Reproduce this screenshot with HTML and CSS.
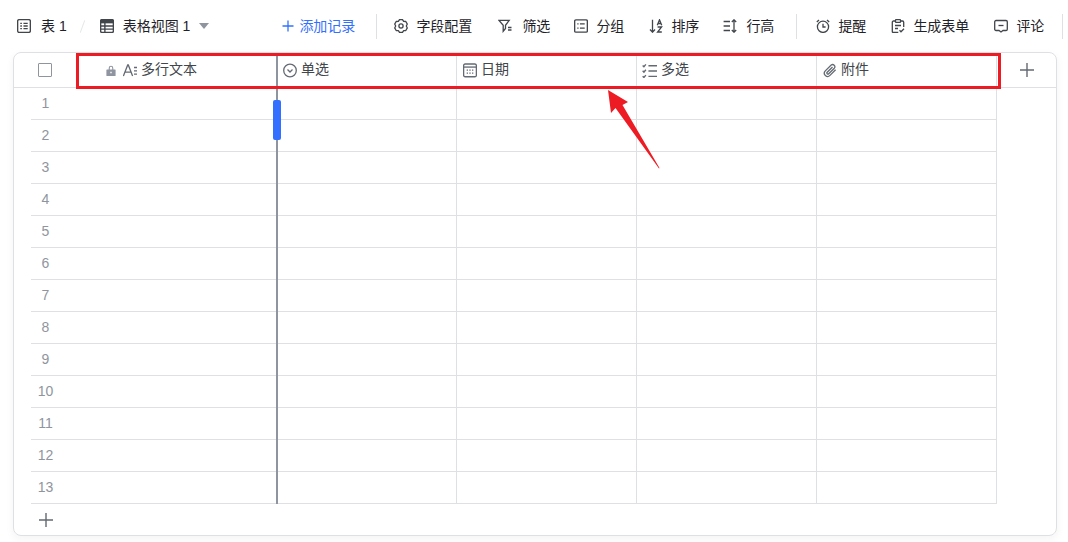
FILE: index.html
```html
<!DOCTYPE html>
<html lang="zh">
<head>
<meta charset="utf-8">
<title>表格视图 1</title>
<link rel="stylesheet" href="styles.css">
</head>
<body>
<header class="toolbar">
  <div class="tool tool-table"><svg class="icon" viewBox="0.4 0.4 13.2 13.2"><rect x="1" y="1" width="12" height="12" rx="1.5" class="s"/><path class="s" d="M3.500 4.500h1.500M6.500 4.500h4M3.500 7h1.500M6.500 7h4M3.500 9.500h1.500M6.500 9.500h4"/></svg><span>表 1</span></div>
  <span class="slash"></span>
  <div class="tool tool-view"><svg class="icon" viewBox="0.4 0.4 13.2 13.2"><rect x="1" y="1" width="12" height="12" rx="1.200" class="s"/><path class="f" d="M1 1h12v3.500H1z"/><path class="s" d="M1 7h12M1 10h12M5 4v9"/></svg><span>表格视图 1</span><i class="caret"></i></div>
  <div class="tool tool-add"><svg class="plus" viewBox="0 0 12 12"><path d="M6 .5v11M.5 6h11"/></svg><span>添加记录</span></div>
  <span class="divider div-a"></span>
  <div class="tool tool-fields"><svg class="icon" viewBox="0 0 14 14"><path class="s" stroke-linejoin="round" d="M4.350 2.410 5.520.570H8.480L9.650 2.410 11.830 2.500 13.310 5.070 12.300 7 13.310 8.930 11.830 11.500 9.650 11.590 8.480 13.430H5.520L4.350 11.590 2.170 11.500.690 8.930 1.700 7 .690 5.070 2.170 2.500z"/><circle class="s" cx="7" cy="7" r="2.100"/></svg><span>字段配置</span></div>
  <div class="tool tool-filter"><svg class="icon" viewBox="0 0 14 14"><path class="s" d="M.8 1.300h10.400L7.500 6.300v3.200l-2.300 2.800V6.300z"/><path class="s" d="M10 8.500h3.500M10 11h3.500"/></svg><span>筛选</span></div>
  <div class="tool"><svg class="icon" viewBox="0.4 0.4 13.2 13.2"><rect x="1" y="1.200" width="12" height="11.600" rx="1.200" class="s"/><path class="s" d="M3.500 5h1.200M6 5h4.500M3.500 9h1.200M6 9h4.500"/></svg><span>分组</span></div>
  <div class="tool tool-sort"><svg class="icon" viewBox="0 0 14 14"><path class="s" d="M3.500.8v12.400M1 10.500l2.500 2.700 2.500-2.700"/><path class="s" d="M8.300 6.200 10.500.8l2.200 5.400M9.100 4.500h2.800M8.600 8h4L8.600 13h4.200"/></svg><span>排序</span></div>
  <div class="tool tool-height"><svg class="icon" viewBox="0 0 14 14"><path class="s" d="M.6 2.500h6.400M.6 7h6.400M.6 11.500h6.400M11 .8v12.400M8.800 3l2.200-2.200L13.200 3M8.800 11l2.200 2.200 2.200-2.200"/></svg><span>行高</span></div>
  <span class="divider div-b"></span>
  <div class="tool"><svg class="icon" viewBox="0 0 14 14"><circle class="s" cx="7" cy="7.800" r="5.600"/><path class="s" d="M7 4.700v3.300h2.600M.8 3 3 1M13.200 3 11 1"/></svg><span>提醒</span></div>
  <div class="tool"><svg class="icon" viewBox="0 0 14 14"><path class="s" d="M4.500 2H2.500a1.200 1.200 0 0 0-1.200 1.200v9.300a1 1 0 0 0 1 1h5M9.500 2h2a1.200 1.200 0 0 1 1.200 1.200V8"/><rect class="s" x="4.500" y=".7" width="5" height="2.600" rx=".6"/><path class="s" d="M4 6.500h6M4 9.500h3M8.500 11.300l1.500 1.500 3-3"/></svg><span>生成表单</span></div>
  <div class="tool tool-comment"><svg class="icon" viewBox="0 0 14 14"><path class="s" d="M2 1.500h10a1.300 1.300 0 0 1 1.300 1.300v7.400a1.300 1.300 0 0 1-1.300 1.300H9L7 13l-2-1.500H2A1.300 1.300 0 0 1 .7 10.200V2.800A1.300 1.300 0 0 1 2 1.500z"/><path class="s" d="M4.500 6.500h5"/></svg><span>评论</span></div>
  <span class="divider"></span>
</header>

<main class="card">
  <div class="head">
    <div class="head-check"><span class="checkbox"></span></div>
    <div class="col col-frozen">
      <svg class="lock" viewBox="0 0 10 11"><path fill-rule="evenodd" d="M2.700 4.500V3a2.300 2.300 0 0 1 4.600 0v1.500H9a.6.6 0 0 1 .6.6v5.300a.6.6 0 0 1-.6.6H1a.6.6 0 0 1-.6-.6V5.100A.6.6 0 0 1 1 4.500zm1.100 0h2.400V3a1.200 1.200 0 0 0-2.400 0zM4.300 6.700v1.600h1.400V6.700z"/></svg>
      <svg class="ficon ficon-narrow" viewBox="0 0 14 14"><path class="s" d="M.4 12.600 4.700 1.500h.6l4.300 11.100M2.100 8.700h5.800M11 4h3M11 7.300h3M11 10.600h3"/></svg>
      <span>多行文本</span>
    </div>
    <div class="col"><svg class="ficon ficon-narrow" viewBox="0 0 14 14"><circle class="s" cx="7" cy="7" r="6.300"/><path class="s" d="M4.500 6 7 8.500 9.500 6"/></svg><span>单选</span></div>
    <div class="col col-inset"><svg class="ficon ficon-narrow" viewBox="0.4 1 13.700 13.700"><rect class="s" x="1" y="1.500" width="12.500" height="12.500" rx="1.500"/><path class="s" d="M1 4.500h12.500"/><path class="d" d="M4 6.800h1.300v1.300H4zM6.600 6.800h1.300v1.300H6.600zM9.200 6.800h1.300v1.300H9.200zM4 9.800h1.300v1.300H4zM6.600 9.800h1.300v1.300H6.600zM9.200 9.800h1.300v1.300H9.200z"/></svg><span>日期</span></div>
    <div class="col"><svg class="ficon" viewBox="0 0 14 14"><path class="s" d="M.6 2.300 1.800 3.500 3.600 1.300M.6 7.300 1.800 8.500 3.600 6.300M.6 12.300 1.800 13.500 3.600 11.300M6 2.500h8M6 7.500h8M6 12.500h8"/></svg><span>多选</span></div>
    <div class="col col-inset"><svg class="ficon ficon-narrow" viewBox="0 0 14 14"><path class="s" d="M12.600 6.300 7 11.900a3.200 3.200 0 0 1-4.700-4.500L8.200 1.600a2.200 2.200 0 0 1 3.100 3.100L5.700 10.300a1 1 0 0 1-1.500-1.500L9.500 3.500"/></svg><span>附件</span></div>
    <div class="head-add"><svg class="plus-grey" viewBox="0 0 14 14"><path d="M7 0v14M0 7h14"/></svg></div>
  </div>

  <div class="rows">
    <div class="row"><div class="num">1</div><div class="cell"></div><div class="cell"></div><div class="cell"></div><div class="cell"></div></div>
    <div class="row"><div class="num">2</div><div class="cell"></div><div class="cell"></div><div class="cell"></div><div class="cell"></div></div>
    <div class="row"><div class="num">3</div><div class="cell"></div><div class="cell"></div><div class="cell"></div><div class="cell"></div></div>
    <div class="row"><div class="num">4</div><div class="cell"></div><div class="cell"></div><div class="cell"></div><div class="cell"></div></div>
    <div class="row"><div class="num">5</div><div class="cell"></div><div class="cell"></div><div class="cell"></div><div class="cell"></div></div>
    <div class="row"><div class="num">6</div><div class="cell"></div><div class="cell"></div><div class="cell"></div><div class="cell"></div></div>
    <div class="row"><div class="num">7</div><div class="cell"></div><div class="cell"></div><div class="cell"></div><div class="cell"></div></div>
    <div class="row"><div class="num">8</div><div class="cell"></div><div class="cell"></div><div class="cell"></div><div class="cell"></div></div>
    <div class="row"><div class="num">9</div><div class="cell"></div><div class="cell"></div><div class="cell"></div><div class="cell"></div></div>
    <div class="row"><div class="num">10</div><div class="cell"></div><div class="cell"></div><div class="cell"></div><div class="cell"></div></div>
    <div class="row"><div class="num">11</div><div class="cell"></div><div class="cell"></div><div class="cell"></div><div class="cell"></div></div>
    <div class="row"><div class="num">12</div><div class="cell"></div><div class="cell"></div><div class="cell"></div><div class="cell"></div></div>
    <div class="row"><div class="num">13</div><div class="cell"></div><div class="cell"></div><div class="cell"></div><div class="cell"></div></div>
  </div>

  <div class="foot"><svg class="plus-dark" viewBox="0 0 14 14"><path d="M7 0v14M0 7h14"/></svg></div>
  <span class="handle"></span>
</main>

<div class="redbox"></div>
<svg class="arrow" viewBox="0 0 60 85"><path d="M0 0 20 12 14.500 15 51.500 78 51 78.500 7.500 18 3 23z"/></svg>
</body>
</html>
```
FILE: styles.css
```css
* { box-sizing: border-box; }
html, body { margin: 0; padding: 0; }
body {
  position: relative;
  width: 1068px;
  height: 542px;
  overflow: hidden;
  background: #fff;
  font-family: "Liberation Sans", "Noto Sans CJK SC", sans-serif;
  font-size: 14px;
  color: #1f2329;
}
svg { display: block; flex: none; }
.s { fill: none; stroke: currentColor; stroke-width: 1.3; }
.f, .d { fill: currentColor; }

.toolbar {
  display: flex;
  align-items: center;
  height: 52px;
  padding-left: 17px;
}
.tool {
  display: flex;
  align-items: center;
  gap: 8px;
  margin-right: 25px;
  line-height: 20px;
  white-space: nowrap;
}
.icon { width: 14px; height: 14px; color: #41464b; }
.tool-table { gap: 10px; margin-right: 15px; }
.slash {
  width: 1px;
  height: 13px;
  margin-right: 17px;
  background: #e4e6e8;
  transform: rotate(20deg);
}
.tool-view { gap: 9px; margin-right: 73px; }
.caret {
  width: 0;
  height: 0;
  border-left: 5px solid transparent;
  border-right: 5px solid transparent;
  border-top: 6px solid #8f959e;
}
.tool-add { gap: 5px; margin-right: 21px; color: #3370ff; }
.plus { width: 12px; height: 12px; }
.plus path { fill: none; stroke: #3370ff; stroke-width: 1.3; }
.tool-fields { margin-right: 26px; }
.tool-filter { gap: 10px; margin-right: 24px; }
.tool-sort { margin-right: 24px; }
.tool-height { gap: 9px; margin-right: 22px; }
.tool-comment { margin-right: 18px; }
.divider { width: 1px; height: 25px; background: #dee0e3; flex: none; }
.div-a { margin-right: 17px; }
.div-b { margin-right: 19px; }

.card {
  position: relative;
  width: 1044px;
  height: 484px;
  margin-left: 13px;
  border: 1px solid #dee0e3;
  border-radius: 8px;
  box-shadow: 0 3px 8px rgba(31, 35, 41, .05);
}
.head {
  display: grid;
  grid-template-columns: 63px 201px 179px 180px 180px 180px 1fr;
  height: 35px;
  border-bottom: 1px solid #dee0e3;
  color: #41464b;
}
.head-check { display: flex; align-items: center; justify-content: center; padding-right: 1px; }
.checkbox { width: 14px; height: 14px; border: 1.5px solid #8f959e; border-radius: 1px; }
.col {
  display: flex;
  align-items: center;
  gap: 4px;
  padding: 0 0 4px 5px;
  border-right: 1px solid #dee0e3;
}
.col-inset { padding-left: 6px; }
.col-frozen {
  padding-left: 29px;
  border-right: 2px solid #8f959e;
}
.lock { width: 10px; height: 11px; margin: 4px 3px 0 0; fill: #8f959e; }
.ficon { width: 15px; height: 15px; margin-top: 4px; color: #646a73; }
.ficon-narrow { width: 14px; }
.head-add { display: flex; align-items: center; justify-content: center; }
.plus-grey { width: 14px; height: 14px; }
.plus-grey path, .plus-dark path { fill: none; stroke: #646a73; stroke-width: 1.4; }

.rows { margin-left: 17px; width: 966px; }
.row {
  display: grid;
  grid-template-columns: 247px 179px 180px 180px 180px;
  height: 32px;
  border-bottom: 1px solid #dee0e3;
}
.num {
  display: flex;
  align-items: center;
  justify-content: center;
  margin-bottom: -1px;
  padding: 0 216px 2px 0;
  color: #8f959e;
  border-right: 2px solid #8f959e;
}
.cell { border-right: 1px solid #dee0e3; }
.foot { display: flex; align-items: center; height: 32px; padding-left: 25px; }
.plus-dark { width: 14px; height: 14px; }

.handle {
  position: absolute;
  left: 259px;
  top: 47px;
  width: 8px;
  height: 40px;
  border-radius: 2px;
  background: #3370ff;
}
.redbox {
  position: absolute;
  left: 76px;
  top: 53px;
  width: 925px;
  height: 36px;
  border: 3px solid #ed1c24;
}
.arrow {
  position: absolute;
  left: 608px;
  top: 90px;
  width: 60px;
  height: 85px;
}
.arrow path { fill: #ed1c24; }
```
